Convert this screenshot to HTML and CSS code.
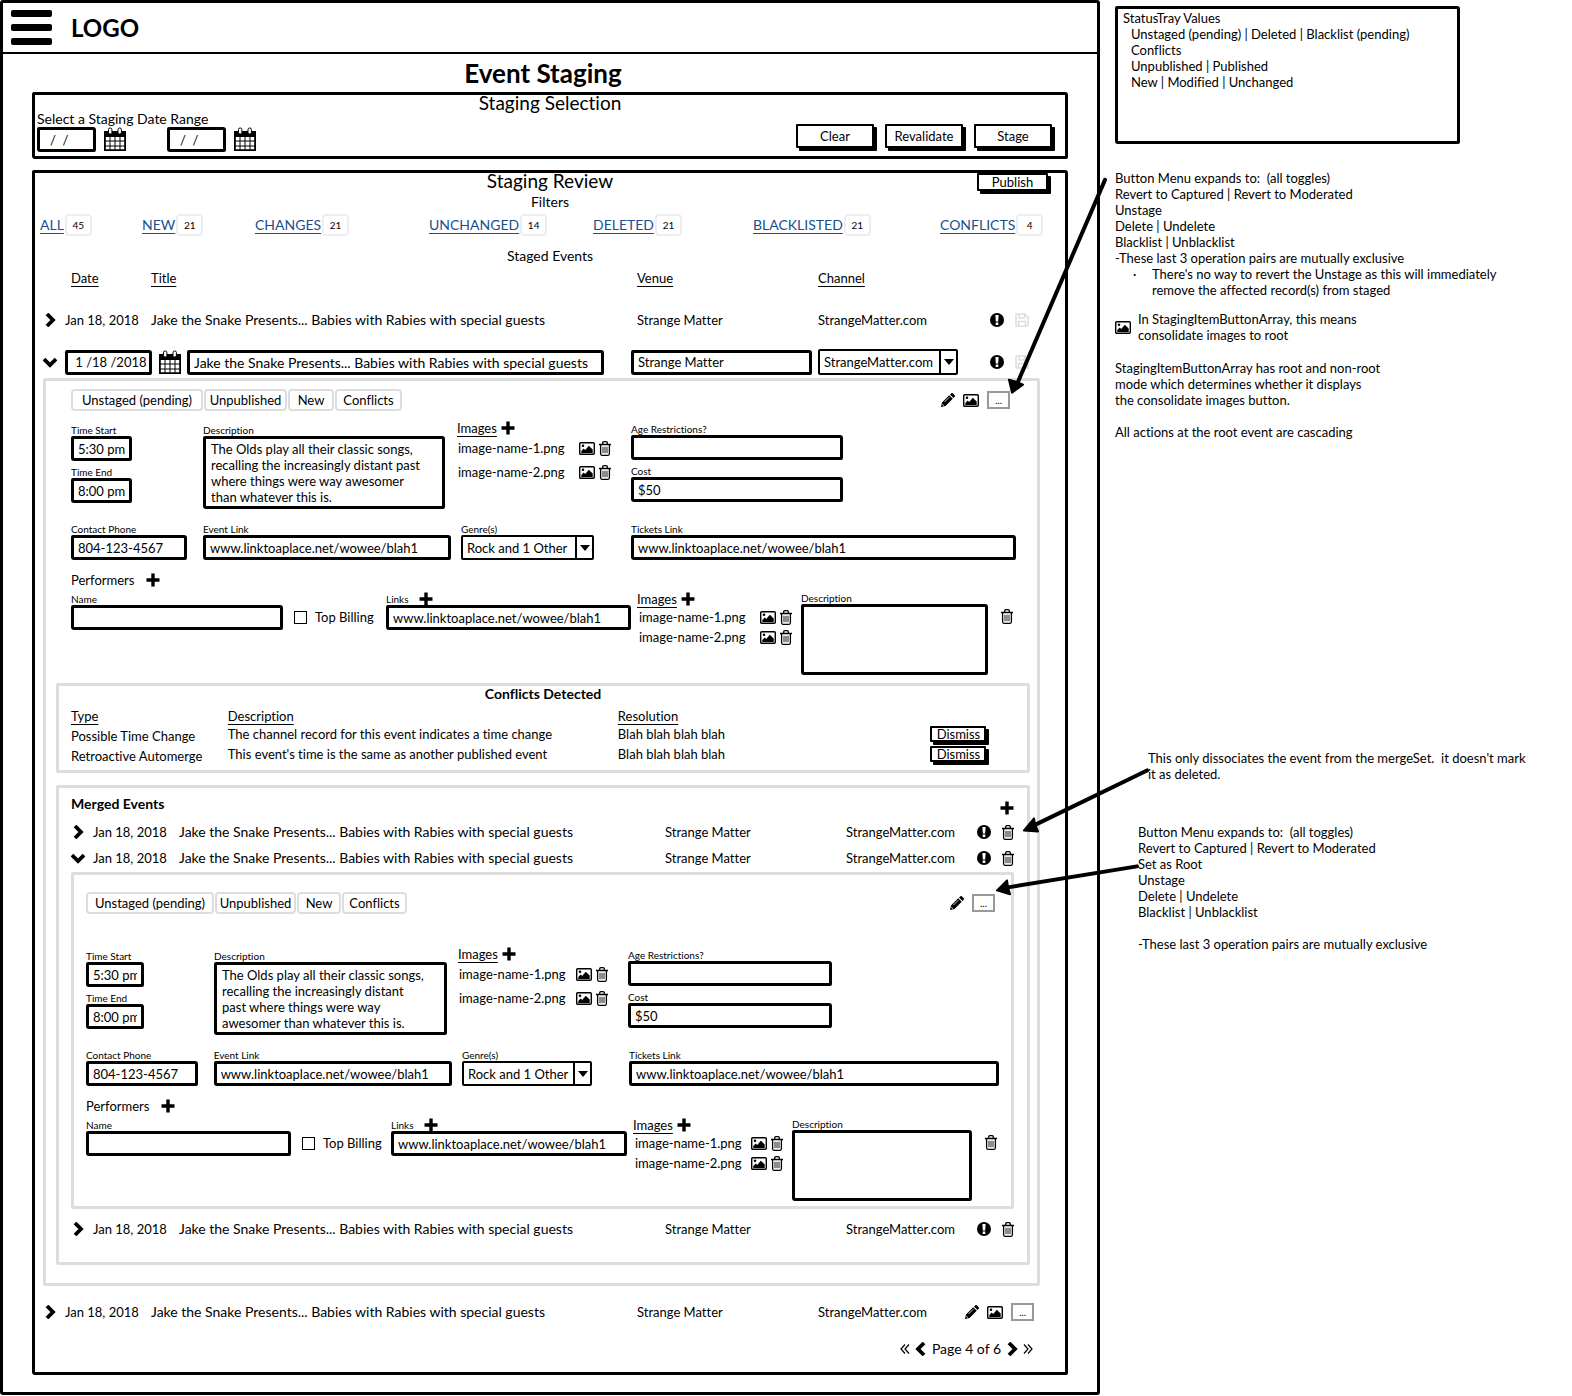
FILE: index.html
```html
<!DOCTYPE html>
<html lang="en">
<head>
<meta charset="utf-8">
<title>Event Staging</title>
<link rel="stylesheet" href="styles.css">
</head>
<body>
<svg class="sprite" aria-hidden="true">
  <symbol id="calendar" viewBox="0 0 22 25"><path d="M0 4h22v6H0z"/><path d="M1 9v14h20V9M1 14h20M1 19h20M6 9v14M11 9v14M16 9v14" fill="none" stroke="#000" stroke-width="1"/><path d="M.8 8v15.2h20.4V8" fill="none" stroke="#000" stroke-width="1.6"/><rect x="4.5" y="1" width="3.4" height="6" rx="1.5" fill="#fff" stroke="#000"/><rect x="14" y="1" width="3.4" height="6" rx="1.5" fill="#fff" stroke="#000"/></symbol>
  <symbol id="chevron" viewBox="0 0 14 14"><path d="M4 1l6 6-6 6" fill="none" stroke="#000" stroke-width="3.8"/></symbol>
  <symbol id="alert" viewBox="0 0 14 14"><circle cx="7" cy="7" r="7"/><path d="M5.4 2h3.2l-.4 6.400H5.800zM5.700 9.600h2.600v2.400H5.700z" fill="#fff"/></symbol>
  <symbol id="save" viewBox="0 0 14 14"><path d="M1 1h9l3 3v9H1zM4 1v4h5.500V1M3.500 13V8.500h7V13" fill="none" stroke="#ddd" stroke-width="1.500"/></symbol>
  <symbol id="pencil" viewBox="0 0 14 14"><path d="M0 14l1-4.500L8.200 2.300l3.500 3.500L4.500 13zM9 1.500L10.200.4c.5-.5 1.200-.5 1.700 0l1.700 1.700c.5.500.5 1.200 0 1.700L12.500 5z"/><path d="M1.200 11l1.800 1.800M3.500 9L8.300 4.200" stroke="#fff" stroke-width=".8"/></symbol>
  <symbol id="picture" viewBox="0 0 16 13"><rect x=".7" y=".7" width="14.600" height="11.600" rx="1" fill="none" stroke="#000" stroke-width="1.400"/><circle cx="4" cy="3.800" r="1.300"/><path d="M2.300 11V9l2.500-2.500L6.200 8l3.600-4.300 3.900 3.800V11z"/></symbol>
  <symbol id="trash" viewBox="0 0 12 15"><path d="M0 3.500h12M3.700 3.500V1.800q0-1.100 1.100-1.100h2.400q1.100 0 1.100 1.100v1.700M1.600 3.500v9.300q0 1.500 1.300 1.500h6.200q1.300 0 1.300-1.500V3.500" fill="none" stroke="#000" stroke-width="1.300"/><path d="M4 5.800v6.400M6 5.800v6.400M8 5.800v6.400" stroke="#000" stroke-width=".9"/></symbol>
  <symbol id="plus" viewBox="0 0 14 14"><path d="M7 .5v13M.5 7h13" stroke="#000" stroke-width="3.400"/></symbol>
  <symbol id="first" viewBox="0 0 10 10"><path d="M5 .5L1 5l4 4.500M9 .5L5 5l4 4.500" fill="none" stroke="#000" stroke-width="1.200"/></symbol>
  <symbol id="caret" viewBox="0 0 10 6"><path d="M0 0h10L5 6z"/></symbol>
</svg>

<div class="page">
  <main class="frame">
    <header class="topbar">
      <button class="burger" aria-label="Menu"><span></span><span></span><span></span></button>
      <strong class="logo">LOGO</strong>
    </header>
    <h1>Event Staging</h1>

    <section class="box selection">
      <h2>Staging Selection</h2>
      <div class="selection-row">
        <div>
          <label class="range-label" for="from">Select a Staging Date Range</label>
          <div class="range">
            <input class="field date" id="from" value="/  /"><button class="icon" aria-label="Pick start"><svg class="i-cal"><use href="#calendar"/></svg></button>
            <input class="field date date-to" aria-label="To" value="/  /"><button class="icon" aria-label="Pick end"><svg class="i-cal"><use href="#calendar"/></svg></button>
          </div>
        </div>
        <div class="actions">
          <button class="btn">Clear</button><button class="btn">Revalidate</button><button class="btn">Stage</button>
        </div>
      </div>
    </section>

    <section class="box review">
      <div class="review-head"><h2>Staging Review</h2><button class="btn publish">Publish</button></div>
      <h3>Filters</h3>
      <nav class="filters">
        <div><a href="#">ALL</a><span class="badge">45</span></div>
        <div><a href="#">NEW</a><span class="badge">21</span></div>
        <div><a href="#">CHANGES</a><span class="badge">21</span></div>
        <div><a href="#">UNCHANGED</a><span class="badge">14</span></div>
        <div><a href="#">DELETED</a><span class="badge">21</span></div>
        <div><a href="#">BLACKLISTED</a><span class="badge">21</span></div>
        <div><a href="#">CONFLICTS</a><span class="badge">4</span></div>
      </nav>
      <h3 class="staged">Staged Events</h3>
      <div class="event head"><span></span><u class="head-date">Date</u><u>Title</u><u>Venue</u><u>Channel</u></div>

      <div class="event first">
        <button class="icon toggle" aria-label="Expand"><svg class="i14"><use href="#chevron"/></svg></button>
        <span>Jan 18, 2018</span><span class="title">Jake the Snake Presents... Babies with Rabies with special guests</span><span>Strange Matter</span><span>StrangeMatter.com</span>
        <span class="tools"><svg class="i14"><use href="#alert"/></svg><svg class="i14"><use href="#save"/></svg></span>
      </div>

      <div class="event edit">
        <button class="icon toggle open" aria-label="Collapse"><svg class="i14"><use href="#chevron"/></svg></button>
        <div class="date-cell"><input class="field" aria-label="Date" value=" 1 /18 /2018"><button class="icon" aria-label="Pick date"><svg class="i-cal"><use href="#calendar"/></svg></button></div>
        <div class="title-cell"><input class="field title" aria-label="Title" value="Jake the Snake Presents... Babies with Rabies with special guests"></div>
        <div class="venue-cell"><input class="field" aria-label="Venue" value="Strange Matter"></div>
        <div class="channel-cell"><div class="select"><select aria-label="Channel"><option>StrangeMatter.com</option></select><span><svg><use href="#caret"/></svg></span></div></div>
        <span class="tools"><svg class="i14"><use href="#alert"/></svg><svg class="i14"><use href="#save"/></svg></span>
      </div>

      <div class="panel root">
        <div class="details">
          <div class="status">
            <div class="tags"><span>Unstaged (pending)</span><span>Unpublished</span><span>New</span><span>Conflicts</span></div>
            <div class="menu"><button class="icon" aria-label="Edit"><svg class="i14"><use href="#pencil"/></svg></button><button class="icon" aria-label="Consolidate images"><svg class="i-pic"><use href="#picture"/></svg></button><button class="more">...</button></div>
          </div>
          <div class="row-a">
            <div class="times">
              <label for="r-start">Time Start</label><input class="field" id="r-start" value="5:30 pm">
              <label for="r-end">Time End</label><input class="field" id="r-end" value="8:00 pm">
            </div>
            <div class="about"><label for="r-desc">Description</label><textarea class="field" id="r-desc">The Olds play all their classic songs, recalling the increasingly distant past where things were way awesomer than whatever this is.</textarea></div>
            <div class="images">
              <div class="images-head"><u>Images</u><button class="icon" aria-label="Add image"><svg class="i14"><use href="#plus"/></svg></button></div>
              <div class="image"><span>image-name-1.png</span><svg class="i-pic"><use href="#picture"/></svg><svg class="i-trash"><use href="#trash"/></svg></div>
              <div class="image"><span>image-name-2.png</span><svg class="i-pic"><use href="#picture"/></svg><svg class="i-trash"><use href="#trash"/></svg></div>
            </div>
            <div class="fees">
              <label for="r-age">Age Restrictions?</label><input class="field" id="r-age">
              <label for="r-cost">Cost</label><input class="field" id="r-cost" value="$50">
            </div>
          </div>
          <div class="row-b">
            <div><label for="r-phone">Contact Phone</label><input class="field" id="r-phone" value="804-123-4567"></div>
            <div><label for="r-link">Event Link</label><input class="field" id="r-link" value="www.linktoaplace.net/wowee/blah1"></div>
            <div><label for="r-genre">Genre(s)</label><div class="select"><select id="r-genre"><option>Rock and 1 Other</option></select><span><svg><use href="#caret"/></svg></span></div></div>
            <div><label for="r-tickets">Tickets Link</label><input class="field" id="r-tickets" value="www.linktoaplace.net/wowee/blah1"></div>
          </div>
          <div class="performers">Performers<button class="icon" aria-label="Add performer"><svg class="i14"><use href="#plus"/></svg></button></div>
          <div class="row-c">
            <div class="name"><label for="r-name">Name</label><input class="field" id="r-name"></div>
            <label class="billing"><input type="checkbox">Top Billing</label>
            <div class="links"><div class="links-head"><label for="r-links">Links</label><button class="icon" aria-label="Add link"><svg class="i14"><use href="#plus"/></svg></button></div><input class="field" id="r-links" value="www.linktoaplace.net/wowee/blah1"></div>
            <div class="images">
              <div class="images-head"><u>Images</u><button class="icon" aria-label="Add image"><svg class="i14"><use href="#plus"/></svg></button></div>
              <div class="image"><span>image-name-1.png</span><svg class="i-pic"><use href="#picture"/></svg><svg class="i-trash"><use href="#trash"/></svg></div>
              <div class="image"><span>image-name-2.png</span><svg class="i-pic"><use href="#picture"/></svg><svg class="i-trash"><use href="#trash"/></svg></div>
            </div>
            <div class="bio"><label for="r-bio">Description</label><textarea class="field" id="r-bio"></textarea></div>
            <button class="icon remove" aria-label="Remove performer"><svg class="i-trash"><use href="#trash"/></svg></button>
          </div>
        </div>

        <section class="panel conflicts">
          <h3>Conflicts Detected</h3>
          <table>
            <thead><tr><th class="c-type">Type</th><th class="c-desc">Description</th><th class="c-res">Resolution</th><th></th></tr></thead>
            <tbody>
              <tr><td class="kind">Possible Time Change</td><td>The channel record for this event indicates a time change</td><td>Blah blah blah blah</td><td><button class="btn dismiss">Dismiss</button></td></tr>
              <tr><td class="kind">Retroactive Automerge</td><td>This event's time is the same as another published event</td><td>Blah blah blah blah</td><td><button class="btn dismiss">Dismiss</button></td></tr>
            </tbody>
          </table>
        </section>

        <section class="panel merged">
          <div class="merged-head"><h3>Merged Events</h3><button class="icon" aria-label="Merge event"><svg class="i14"><use href="#plus"/></svg></button></div>
          <div class="event sub">
            <button class="icon toggle" aria-label="Expand"><svg class="i14"><use href="#chevron"/></svg></button>
            <span>Jan 18, 2018</span><span class="title">Jake the Snake Presents... Babies with Rabies with special guests</span><span>Strange Matter</span><span>StrangeMatter.com</span>
            <span class="tools"><svg class="i14"><use href="#alert"/></svg><svg class="i-trash"><use href="#trash"/></svg></span>
          </div>
          <div class="event sub">
            <button class="icon toggle open" aria-label="Collapse"><svg class="i14"><use href="#chevron"/></svg></button>
            <span>Jan 18, 2018</span><span class="title">Jake the Snake Presents... Babies with Rabies with special guests</span><span>Strange Matter</span><span>StrangeMatter.com</span>
            <span class="tools"><svg class="i14"><use href="#alert"/></svg><svg class="i-trash"><use href="#trash"/></svg></span>
          </div>
          <div class="panel details nested">
            <div class="status">
              <div class="tags"><span>Unstaged (pending)</span><span>Unpublished</span><span>New</span><span>Conflicts</span></div>
              <div class="menu"><button class="icon" aria-label="Edit"><svg class="i14"><use href="#pencil"/></svg></button><button class="more">...</button></div>
            </div>
            <div class="row-a">
              <div class="times">
                <label for="n-start">Time Start</label><input class="field" id="n-start" value="5:30 pm">
                <label for="n-end">Time End</label><input class="field" id="n-end" value="8:00 pm">
              </div>
              <div class="about"><label for="n-desc">Description</label><textarea class="field" id="n-desc">The Olds play all their classic songs, recalling the increasingly distant past where things were way awesomer than whatever this is.</textarea></div>
              <div class="images">
                <div class="images-head"><u>Images</u><button class="icon" aria-label="Add image"><svg class="i14"><use href="#plus"/></svg></button></div>
                <div class="image"><span>image-name-1.png</span><svg class="i-pic"><use href="#picture"/></svg><svg class="i-trash"><use href="#trash"/></svg></div>
                <div class="image"><span>image-name-2.png</span><svg class="i-pic"><use href="#picture"/></svg><svg class="i-trash"><use href="#trash"/></svg></div>
              </div>
              <div class="fees">
                <label for="n-age">Age Restrictions?</label><input class="field" id="n-age">
                <label for="n-cost">Cost</label><input class="field" id="n-cost" value="$50">
              </div>
            </div>
            <div class="row-b">
              <div><label for="n-phone">Contact Phone</label><input class="field" id="n-phone" value="804-123-4567"></div>
              <div><label for="n-link">Event Link</label><input class="field" id="n-link" value="www.linktoaplace.net/wowee/blah1"></div>
              <div><label for="n-genre">Genre(s)</label><div class="select"><select id="n-genre"><option>Rock and 1 Other</option></select><span><svg><use href="#caret"/></svg></span></div></div>
              <div><label for="n-tickets">Tickets Link</label><input class="field" id="n-tickets" value="www.linktoaplace.net/wowee/blah1"></div>
            </div>
            <div class="performers">Performers<button class="icon" aria-label="Add performer"><svg class="i14"><use href="#plus"/></svg></button></div>
            <div class="row-c">
              <div class="name"><label for="n-name">Name</label><input class="field" id="n-name"></div>
              <label class="billing"><input type="checkbox">Top Billing</label>
              <div class="links"><div class="links-head"><label for="n-links">Links</label><button class="icon" aria-label="Add link"><svg class="i14"><use href="#plus"/></svg></button></div><input class="field" id="n-links" value="www.linktoaplace.net/wowee/blah1"></div>
              <div class="images">
                <div class="images-head"><u>Images</u><button class="icon" aria-label="Add image"><svg class="i14"><use href="#plus"/></svg></button></div>
                <div class="image"><span>image-name-1.png</span><svg class="i-pic"><use href="#picture"/></svg><svg class="i-trash"><use href="#trash"/></svg></div>
                <div class="image"><span>image-name-2.png</span><svg class="i-pic"><use href="#picture"/></svg><svg class="i-trash"><use href="#trash"/></svg></div>
              </div>
              <div class="bio"><label for="n-bio">Description</label><textarea class="field" id="n-bio"></textarea></div>
              <button class="icon remove" aria-label="Remove performer"><svg class="i-trash"><use href="#trash"/></svg></button>
            </div>
          </div>
          <div class="event sub">
            <button class="icon toggle" aria-label="Expand"><svg class="i14"><use href="#chevron"/></svg></button>
            <span>Jan 18, 2018</span><span class="title">Jake the Snake Presents... Babies with Rabies with special guests</span><span>Strange Matter</span><span>StrangeMatter.com</span>
            <span class="tools"><svg class="i14"><use href="#alert"/></svg><svg class="i-trash"><use href="#trash"/></svg></span>
          </div>
        </section>
      </div>

      <div class="event last">
        <button class="icon toggle" aria-label="Expand"><svg class="i14"><use href="#chevron"/></svg></button>
        <span>Jan 18, 2018</span><span class="title">Jake the Snake Presents... Babies with Rabies with special guests</span><span>Strange Matter</span><span>StrangeMatter.com</span>
        <div class="menu"><button class="icon" aria-label="Edit"><svg class="i14"><use href="#pencil"/></svg></button><button class="icon" aria-label="Consolidate images"><svg class="i-pic"><use href="#picture"/></svg></button><button class="more">...</button></div>
      </div>
      <nav class="pager" aria-label="Pages">
        <button class="icon" aria-label="First"><svg class="i10"><use href="#first"/></svg></button>
        <button class="icon flip" aria-label="Previous"><svg class="i14"><use href="#chevron"/></svg></button>
        <span>Page 4 of 6</span>
        <button class="icon" aria-label="Next"><svg class="i14"><use href="#chevron"/></svg></button>
        <button class="icon flip" aria-label="Last"><svg class="i10"><use href="#first"/></svg></button>
      </nav>
    </section>
  </main>

  <aside class="notes">
    <div class="box legend">
      <p>StatusTray Values</p>
      <p class="indent">Unstaged (pending) | Deleted | Blacklist (pending)<br>Conflicts<br>Unpublished | Published<br>New | Modified | Unchanged</p>
    </div>
    <div class="note menu-note">
      <p>Button Menu expands to:&nbsp; (all toggles)<br>Revert to Captured | Revert to Moderated<br>Unstage<br>Delete | Undelete<br>Blacklist | Unblacklist<br>-These last 3 operation pairs are mutually exclusive</p>
      <ul><li>There's no way to revert the Unstage as this will immediately<br>remove the affected record(s) from staged</li></ul>
    </div>
    <div class="note picture-note"><svg class="i-pic"><use href="#picture"/></svg><p>In StagingItemButtonArray, this means<br>consolidate images to root</p></div>
    <p class="note mode-note">StagingItemButtonArray has root and non-root<br>mode which determines whether it displays<br>the consolidate images button.<br><br>All actions at the root event are cascading</p>
    <p class="note merge-note">This only dissociates the event from the mergeSet.&nbsp; it doesn't mark<br>it as deleted.</p>
    <p class="note sub-note">Button Menu expands to:&nbsp; (all toggles)<br>Revert to Captured | Revert to Moderated<br>Set as Root<br>Unstage<br>Delete | Undelete<br>Blacklist | Unblacklist<br><br>-These last 3 operation pairs are mutually exclusive</p>
  </aside>

  <svg class="arrows" viewBox="0 0 1572 1396" preserveAspectRatio="none" aria-hidden="true">
    <path d="M1105 180L1018 382M1147 771L1034 826M1137 867L1008 888" fill="none" stroke="#000" stroke-width="4" stroke-linecap="round"/>
    <path d="M1012 393l-3-13 7 2 7 3zM1024 831l10-12 1 6 3 7zM997 891l10-10 1 7 2 7z" stroke="#000" stroke-width="2" stroke-linejoin="round"/>
  </svg>
</div>
</body>
</html>
```

FILE: styles.css
```css
* { box-sizing: border-box; }
body { margin: 0; background: #fff; color: #000; font: 13px/16px Lato, "Open Sans", sans-serif; font-variant-ligatures: none; }
h1, h2, h3, p, ul { margin: 0; padding: 0; font-size: inherit; font-weight: normal; }
button, input, select, textarea { font: inherit; color: inherit; margin: 0; min-width: 0; }
svg { display: block; flex: none; }
u { text-underline-offset: 3px; }
.sprite { position: absolute; width: 0; height: 0; }

.i14 { width: 14px; height: 14px; }
.i10 { width: 10px; height: 10px; }
.i-cal { width: 22px; height: 25px; }
.i-pic { width: 16px; height: 13px; }
.i-trash { width: 12px; height: 15px; }
.icon { border: 0; padding: 0; background: none; flex: none; }
.flip svg { transform: scaleX(-1); }

.page { position: relative; display: grid; grid-template-columns: 1100fr 472fr; }
.arrows { position: absolute; inset: 0; width: 100%; height: 100%; pointer-events: none; }
.frame { min-width: 0; border: 3px solid #000; border-radius: 3px; padding-bottom: 17px; }
.box { border: 3px solid #000; border-radius: 2px 3px 2px 3px; }
.panel { border: 3px solid #ddd; border-radius: 2px; }

.topbar { display: flex; align-items: center; gap: 19px; height: 51px; padding-left: 8px; border-bottom: 2px solid #000; }
.burger { display: grid; gap: 7px; width: 41px; padding: 0; border: 0; background: none; }
.burger span { height: 7px; border-radius: 2px; background: #000; }
.logo { font-size: 24px; }
h1 { padding-right: 14px; text-align: center; font-size: 26px; font-weight: bold; line-height: 38px; }
h2 { text-align: center; font-size: 19px; line-height: 18px; }
h3 { text-align: center; font-size: 14px; }

.field { display: block; width: 100%; height: 25px; padding: 0 4px; border: 3px solid #000; border-radius: 2px 3px 2px 3px; background: #fff; outline: 0; white-space: pre; }
textarea.field { padding: 2px 17px 0 5px; resize: none; overflow: hidden; white-space: pre-wrap; }
.select { display: flex; height: 26px; border: 2px solid #000; border-radius: 2px; }
.select select { flex: 1; padding: 0 4px; border: 0; appearance: none; background: none; }
.select span { display: grid; place-items: center; width: 17px; border-left: 2px solid #000; }
.select span svg { width: 10px; height: 6px; }
.btn { width: 78px; height: 24px; padding: 0; border: 2px solid #000; border-radius: 1px; background: #fff; box-shadow: 3px 3px #000; }

.selection { margin: 0 29px 11px; height: 67px; }
.selection h2 { line-height: 16px; }
.selection-row { display: flex; justify-content: space-between; padding: 0 13px 0 2px; }
.range-label { display: block; font-size: 14px; }
.range { display: flex; gap: 8px; }
.date { width: 59px; padding-left: 10px; }
.date-to { margin-left: 33px; }
.actions { display: flex; gap: 11px; padding-top: 13px; }

.review { margin: 0 29px; padding-bottom: 15px; }
.review-head { display: grid; grid-template-columns: 1fr auto 1fr; height: 21px; }
.review-head h2 { grid-column: 2; line-height: 16px; }
.publish { justify-self: end; width: 71px; height: 18px; margin-right: 17px; line-height: 14px; }
.filters { display: grid; grid-template-columns: 102fr 113fr 174fr 164fr 160fr 187fr 125fr; margin-top: 3px; padding-left: 5px; }
.filters div { display: flex; align-items: center; gap: 1px; height: 24px; }
.filters a { color: #1a4f8f; font-size: 14px; text-underline-offset: 3px; }
.badge { width: 27px; border: 2px solid #eee; border-radius: 4px; text-align: center; font-size: 10px; line-height: 18px; }
.staged { margin-top: 11px; }

.event { display: grid; grid-template-columns: 30fr 86fr 486fr 181fr 172fr 75fr; align-items: center; height: 24px; }
.event > * { min-width: 0; white-space: nowrap; }
.title { font-size: 14px; }
.head { height: 16px; margin-top: 6px; }
.head-date { padding-left: 6px; }
.first { margin-top: 22px; }
.edit { grid-template-columns: 30fr 122fr 444fr 187fr 172fr 75fr; height: 26px; margin: 17px 0 3px; }
.last { margin: 14px 0 17px; grid-template-columns: 30fr 86fr 486fr 181fr 147fr 100fr; }
.sub { grid-template-columns: 34fr 86fr 486fr 181fr 131fr 50fr; height: 26px; }
.toggle { justify-self: center; }
.sub .toggle { padding-left: 4px; }
.open svg { transform: rotate(90deg); }
.tools { display: flex; align-items: center; gap: 11px; }
.date-cell { display: flex; gap: 7px; padding-right: 6px; }
.date-cell .field { padding-right: 0; }
.date-cell .icon { width: 22px; }
.title-cell { padding-right: 27px; }
.venue-cell { padding-right: 6px; }
.channel-cell { padding-right: 32px; }
.menu { display: flex; align-items: center; gap: 8px; }
.more { width: 23px; height: 18px; padding: 0; border: 2px solid #999; background: #fff; font-size: 10px; line-height: 10px; }

.root { margin: 0 25px 0 8px; padding: 8px 7px 18px 10px; }
.details { padding-left: 15px; }
.status { display: flex; justify-content: space-between; padding-right: 20px; }
.tags { display: grid; grid-template-columns: 132px 83px 46px 67px; gap: 1px; }
.tags span { border: 2px solid #ddd; border-radius: 4px; line-height: 18px; text-align: center; white-space: nowrap; }
.details label { display: block; font-size: 10px; line-height: 12px; }
.row-a { display: grid; grid-template-columns: 132fr 254fr 174fr 399fr; margin-top: 9px; height: 88px; }
.times { width: 61px; padding-top: 4px; }
.times label + input, .fees label + input { margin-bottom: 5px; }
.about { padding: 4px 12px 0 0; }
.about textarea { height: 73px; }
.images-head { display: flex; align-items: center; gap: 4px; height: 16px; }
.image { display: flex; align-items: center; gap: 4px; height: 24px; padding: 0 20px 0 1px; }
.image span { flex: 1; }
.fees { padding: 3px 187px 0 0; }
.row-b { display: grid; grid-template-columns: 132fr 258fr 170fr 399fr; margin-top: 15px; }
.row-b > :nth-child(1) { padding-right: 16px; }
.row-b > :nth-child(2) { padding-right: 10px; }
.row-b > :nth-child(3) { padding-right: 37px; }
.row-b > :nth-child(4) { padding-right: 14px; }
.row-b .select, .row-b .field { height: 25px; }
.performers { display: flex; align-items: center; gap: 12px; margin-top: 12px; }
.row-c { display: grid; grid-template-columns: 223fr 92fr 251fr 164fr 200fr 29fr; margin-top: 2px; height: 84px; }
.row-c > * { min-width: 0; }
.name { padding: 3px 11px 0 0; }
.row-c .billing { display: flex; align-items: center; gap: 8px; height: 16px; margin-top: 19px; font-size: 13px; line-height: 16px; white-space: nowrap; }
.billing input { width: 13px; height: 13px; border: 1px solid #000; appearance: none; }
.links { padding: 3px 6px 0 0; }
.links-head { display: flex; align-items: center; gap: 10px; height: 12px; }
.row-c .images { padding-top: 1px; }
.row-c .image { height: 20px; padding: 0 9px 0 2px; }
.bio { padding: 2px 13px 0 0; }
.bio textarea { height: 71px; }
.remove { align-self: start; margin-top: 19px; }

.conflicts { margin-top: 9px; padding: 0 0 6px 12px; }
.conflicts h3 { padding-right: 12px; font-weight: bold; }
table { width: 100%; margin-top: 5px; border-collapse: collapse; table-layout: fixed; }
th, td { height: 20px; padding: 0; text-align: left; font-weight: normal; white-space: nowrap; }
th { height: 17px; text-decoration: underline; text-underline-offset: 3px; }
.kind { padding-top: 4px; }
.c-type { width: 16.4%; }
.c-desc { width: 40.8%; }
.c-res { width: 32.7%; }
.dismiss { display: block; width: 56px; height: 16px; line-height: 12px; }

.merged { margin-top: 12px; padding: 8px 0 20px; }
.merged-head { display: flex; justify-content: space-between; align-items: center; height: 23px; padding: 0 13px 0 12px; }
.merged-head h3 { padding-bottom: 7px; font-weight: bold; }
.nested { margin: 1px 13px 7px 12px; padding: 17px 0 6px 12px; }
.nested .status { padding-right: 16px; }
.nested .tags { grid-template-columns: 128px 81px 44px 65px; }
.nested .row-a { grid-template-columns: 128fr 244fr 170fr 383fr; margin-top: 32px; }
.nested .times { width: 58px; }
.nested .about { padding-right: 11px; }
.nested .fees { padding-right: 179px; }
.nested .row-b { grid-template-columns: 128fr 249fr 165fr 383fr; }
.nested .row-b > :nth-child(4) { padding-right: 12px; }
.nested .row-c { grid-template-columns: 216fr 89fr 242fr 159fr 193fr 26fr; }

.pager { display: flex; justify-content: flex-end; align-items: center; gap: 4px; padding-right: 32px; font-size: 14px; }

.notes { padding: 6px 0 0 15px; white-space: nowrap; min-width: 0; }
.legend { width: 345px; height: 138px; padding: 1px 5px; }
.indent { padding-left: 8px; }
.menu-note { margin-top: 26px; }
.menu-note li { margin-left: 37px; list-style: none; }
.menu-note li::before { content: "·"; float: left; margin-left: -19px; }
.picture-note { display: flex; align-items: center; gap: 7px; margin-top: 13px; }
.mode-note { margin-top: 17px; }
.merge-note { margin: 310px 0 0 33px; }
.sub-note { margin: 42px 0 0 23px; }
```
